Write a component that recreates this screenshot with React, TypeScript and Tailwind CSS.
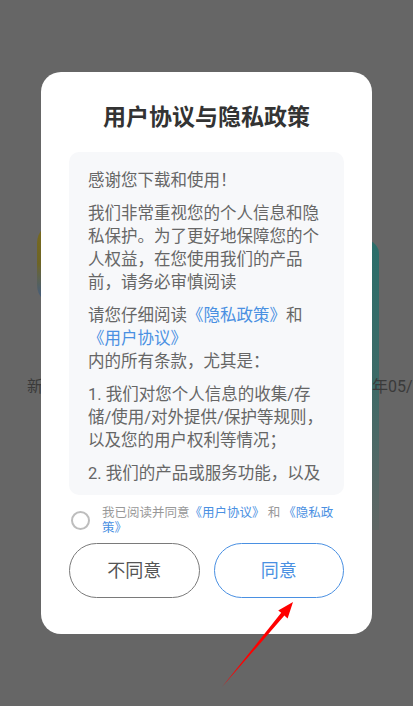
import React from "react";

const FONT = { fontFamily: "Roboto, 'Noto Sans CJK SC', 'Noto Sans', sans-serif" };

function Link({ children }: { children: React.ReactNode }) {
  return <span className="text-[#4a90e2]">{children}</span>;
}

export default function App() {
  return (
    <div className="relative h-[706px] w-full overflow-hidden bg-[#666666]" style={FONT}>
      {/* dimmed page behind the dialog */}
      <div className="grid grid-cols-[minmax(0,1fr)]">
        <div className="[grid-area:1/1] flex items-start justify-between pl-[37px] pr-[34px] pt-[223px]">
          <div className="h-[82px] w-[40px] rounded-l-[20px] bg-gradient-to-b from-[#7a6a1c] via-[#6d6425] to-[#3b578a]" />
          <div className="mt-[17px] h-[290px] w-[60px] rounded-tr-[14px] bg-gradient-to-b from-[#2a6e6a] via-[#3d6a67] to-[#5f6664]" />
        </div>
        <div className="[grid-area:1/1] flex overflow-hidden whitespace-nowrap pl-[27px] pt-[376px] text-[16px] leading-[22px] text-[#3a3a3a]">
          <span className="shrink-0">新</span>
          <span className="w-[329px] shrink-0" />
          <span className="shrink-0">年05/20</span>
        </div>
      </div>

      {/* dialog */}
      <div className="absolute inset-0 flex items-center justify-center">
        <div className="w-[331px] rounded-[20px] bg-white px-[28px] pb-[36px] pt-[31px]">
          <h1 className="text-center text-[23px] font-bold leading-[30px] text-[#333333]">
            用户协议与隐私政策
          </h1>
          <div className="mt-[19px] rounded-[10px] bg-[#f7f8fa] px-[19px] pb-[12px] pt-[17px]">
            <div className="h-[314px] overflow-hidden text-[16.5px] leading-[23px] text-[#666666]">
              <p className="mb-[10px]">感谢您下载和使用！</p>
              <p className="mb-[10px]">
                我们非常重视您的个人信息和隐私保护。为了更好地保障您的个人权益，在您使用我们的产品前，请务必审慎阅读
              </p>
              <p className="mb-[10px]">
                请您仔细阅读<Link>《隐私政策》</Link>和<Link>《用户协议》</Link>
                <br />
                内的所有条款，尤其是：
              </p>
              <p className="mb-[10px]">
                1. 我们对您个人信息的收集/存储/使用/对外提供/保护等规则，以及您的用户权利等情况；
              </p>
              <p className="mb-[10px]">
                2. 我们的产品或服务功能，以及您在使用过程中需要注意的相关事项。
              </p>
            </div>
          </div>

          <div className="mt-[10px] flex items-center">
            <div className="ml-[2px] h-[19px] w-[19px] shrink-0 rounded-full border-[2px] border-[#bdbdbd]" />
            <p className="ml-[12px] flex-1 text-[12.5px] leading-[15px] text-[#999999]">
              我已阅读并同意<Link>《用户协议》</Link> 和 <Link>《隐私政策》</Link>
            </p>
          </div>

          <div className="mt-[8px] flex gap-[14px]">
            <button className="h-[55px] flex-1 rounded-full border border-[#7a7a7a] bg-white text-[18px] text-[#555555]">
              不同意
            </button>
            <button className="h-[55px] flex-1 rounded-full border border-[#4a90e2] bg-white text-[18px] text-[#4a90e2]">
              同意
            </button>
          </div>
        </div>
      </div>

      {/* red annotation arrow */}
      <svg className="pointer-events-none absolute left-0 top-0" width="413" height="706" viewBox="0 0 413 706">
        <polygon
          points="293,602 278.2,610.5 281.2,612.8 222,687 284.4,615.6 287.6,618.4"
          fill="#ff0000"
        />
      </svg>
    </div>
  );
}
